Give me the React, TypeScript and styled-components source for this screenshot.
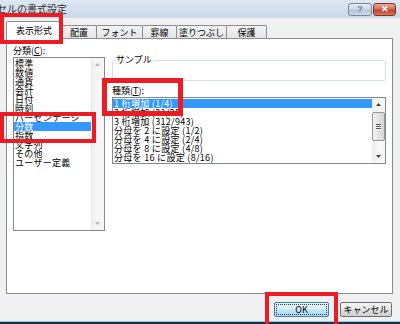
import React from 'react'
import styled, { createGlobalStyle } from 'styled-components'

const GlobalStyle = createGlobalStyle`
  html, body {
    margin: 0;
    padding: 0;
    background: #f0f0f0;
  }
`

const Window = styled.div`
  position: relative;
  width: 400px;
  height: 324px;
  overflow: hidden;
  background: #f0f0f0;
  display: flex;
  flex-direction: column;
  font-family: "Noto Sans CJK JP", "Liberation Sans", sans-serif;
  font-size: 9px;
  color: #000;
`

const TitleBar = styled.div`
  height: 18px;
  flex: none;
  display: flex;
  align-items: center;
  justify-content: space-between;
  padding-right: 4px;
  background: linear-gradient(#dde7f3, #cbd8e8);
  overflow: hidden;
`

const Title = styled.div`
  margin-left: -3px;
  font-size: 10px;
  line-height: 12px;
  color: #2b2b2b;
  white-space: nowrap;
`

const Controls = styled.div`
  display: flex;
  gap: 1px;
  margin-top: 1px;
`

const CaptionButton = styled.div<{ $close?: boolean }>`
  width: ${p => (p.$close ? 23 : 24)}px;
  height: 13px;
  box-sizing: border-box;
  border: 1px solid ${p => (p.$close ? '#8d3023' : '#72869e')};
  border-radius: 3px;
  display: flex;
  align-items: center;
  justify-content: center;
  background: ${p =>
    p.$close
      ? 'linear-gradient(#e9a99a, #d2705d 45%, #c0412d 55%, #d4775f)'
      : 'linear-gradient(#e6edf5, #cdd9e7 45%, #b6c6d9 55%, #cad8e7)'};
  color: ${p => (p.$close ? '#fff' : '#6e7a88')};
  font-family: "Liberation Sans", sans-serif;
  font-weight: bold;
  font-size: 9px;
  line-height: 9px;
`

const Body = styled.div`
  flex: none;
  padding: 3px 7px 0 6px;
  display: flex;
  flex-direction: column;
`

const TabStrip = styled.div`
  position: relative;
  z-index: 1;
  height: 18px;
  margin-bottom: -1px;
  display: flex;
  align-items: flex-end;
`

const Tab = styled.div<{ $active?: boolean; $w: number }>`
  width: ${p => p.$w}px;
  height: ${p => (p.$active ? 18 : 13)}px;
  margin-bottom: ${p => (p.$active ? 0 : 1)}px;
  margin-left: -1px;
  box-sizing: border-box;
  border: 1px solid #898c95;
  border-bottom: none;
  border-radius: 2px 2px 0 0;
  background: ${p => (p.$active ? '#fff' : 'linear-gradient(#f3f3f3, #e5e5e5)')};
  position: relative;
  z-index: ${p => (p.$active ? 2 : 1)};
  display: flex;
  align-items: center;
  justify-content: center;
  line-height: 11px;
  white-space: nowrap;
  &:first-child {
    margin-left: 0;
  }
`

const Panel = styled.div`
  height: 256px;
  box-sizing: border-box;
  border: 1px solid #898c95;
  background: #fff;
  padding: 6px 6px 0 6px;
  display: grid;
  grid-template-columns: 92px 1fr;
  column-gap: 7px;
  align-items: start;
`

const Column = styled.div<{ $top?: number }>`
  display: flex;
  flex-direction: column;
  padding-top: ${p => p.$top ?? 0}px;
`

const Label = styled.div<{ $gap?: number }>`
  height: 12px;
  line-height: 12px;
  margin-top: ${p => p.$gap ?? 0}px;
  white-space: nowrap;
`

const Sample = styled.fieldset`
  margin: 0;
  padding: 0;
  border: 1px solid #d5dfe5;
  border-radius: 3px;
  min-width: 0;
`

const SampleLegend = styled.legend`
  margin-left: 2px;
  padding: 0 1px;
  font-size: 9px;
  line-height: 10px;
  color: #000;
`

const SampleArea = styled.div`
  height: 15px;
`

const ListBox = styled.div<{ $height: number }>`
  height: ${p => p.$height}px;
  box-sizing: border-box;
  border: 1px solid #828790;
  background: #fff;
  display: flex;
`

const Items = styled.div`
  flex: 1;
  min-width: 0;
  padding-top: 1px;
`

const Item = styled.div<{ $selected?: boolean }>`
  height: 9px;
  line-height: 9px;
  padding-left: 1px;
  white-space: nowrap;
  letter-spacing: 0.3px;
  background: ${p => (p.$selected ? '#3399ff' : 'transparent')};
  color: ${p => (p.$selected ? '#fff' : '#000')};
`

const ScrollBar = styled.div`
  width: 13px;
  flex: none;
  display: flex;
  flex-direction: column;
  background: linear-gradient(90deg, #ececec, #f6f6f6 40%, #f6f6f6);
`

const ArrowButton = styled.div`
  height: 13px;
  flex: none;
  display: flex;
  align-items: center;
  justify-content: center;
`

const Track = styled.div`
  flex: 1;
  display: flex;
  flex-direction: column;
`

const Thumb = styled.div`
  height: 29px;
  margin: 1px 0 0 0;
  box-sizing: border-box;
  border: 1px solid #979797;
  border-radius: 2px;
  background: linear-gradient(90deg, #f2f2f2, #e4e4e4 50%, #d6d6d6);
  display: flex;
  flex-direction: column;
  align-items: center;
  justify-content: center;
  gap: 1px;
`

const Grip = styled.div`
  width: 5px;
  height: 1px;
  background: #555;
  box-shadow: 0 1px 0 #fff;
`

const Footer = styled.div`
  flex: 1;
  box-sizing: border-box;
  display: flex;
  justify-content: flex-end;
  align-items: flex-start;
  gap: 11px;
  padding: 8px 8px 0 0;
  border-bottom: 2px solid #1f2e3d;
  box-shadow: inset 0 -1px 0 #8fd0f2;
`

const DialogButton = styled.div<{ $primary?: boolean; $w: number }>`
  width: ${p => p.$w}px;
  height: 15px;
  box-sizing: border-box;
  border: 1px solid ${p => (p.$primary ? '#3c7fb1' : '#707070')};
  border-radius: 2px;
  background: ${p =>
    p.$primary
      ? 'linear-gradient(#e8f5fc, #d9effb 45%, #bee6fd 55%, #a7d9f5)'
      : 'linear-gradient(#f2f2f2, #ebebeb 45%, #dddddd 55%, #cfcfcf)'};
  padding: 1px;
  display: flex;
`

const ButtonFace = styled.div<{ $focus?: boolean }>`
  flex: 1;
  box-sizing: border-box;
  border: 1px dotted ${p => (p.$focus ? '#3a3a3a' : 'transparent')};
  display: flex;
  align-items: center;
  justify-content: center;
  line-height: 9px;
  font-size: 9px;
  white-space: nowrap;
`

const Mark = styled.div<{ $x: number; $y: number; $w: number; $h: number; $b?: number }>`
  position: absolute;
  left: ${p => p.$x}px;
  top: ${p => p.$y}px;
  width: ${p => p.$w}px;
  height: ${p => p.$h}px;
  box-sizing: border-box;
  border: ${p => p.$b ?? 4}px solid #ec1c24;
  z-index: 10;
  pointer-events: none;
`

const Triangle = ({ up, color }: { up?: boolean; color: string }) => (
  <svg width="5" height="3" viewBox="0 0 5 3">
    <polygon points={up ? '0,3 5,3 2.5,0' : '0,0 5,0 2.5,3'} fill={color} />
  </svg>
)

const categories = [
  '標準',
  '数値',
  '通貨',
  '会計',
  '日付',
  '時刻',
  'パーセンテージ',
  '分数',
  '指数',
  '文字列',
  'その他',
  'ユーザー定義',
]

const kinds = [
  '1 桁増加 (1/4)',
  '2 桁増加 (21/25)',
  '3 桁増加 (312/943)',
  '分母を 2 に設定 (1/2)',
  '分母を 4 に設定 (2/4)',
  '分母を 8 に設定 (4/8)',
  '分母を 16 に設定 (8/16)',
]

const tabs = [
  { label: '表示形式', w: 56 },
  { label: '配置', w: 36 },
  { label: 'フォント', w: 47 },
  { label: '罫線', w: 35 },
  { label: '塗りつぶし', w: 51 },
  { label: '保護', w: 41 },
]

export default function App() {
  return (
    <>
      <GlobalStyle />
      <Window>
        <TitleBar>
          <Title>セルの書式設定</Title>
          <Controls>
            <CaptionButton>?</CaptionButton>
            <CaptionButton $close>✕</CaptionButton>
          </Controls>
        </TitleBar>

        <Body>
          <TabStrip>
            {tabs.map((t, i) => (
              <Tab key={t.label} $w={t.w} $active={i === 0}>
                {t.label}
              </Tab>
            ))}
          </TabStrip>

          <Panel>
            <Column>
              <Label>
                分類(<u>C</u>):
              </Label>
              <ListBox $height={174}>
                <Items>
                  {categories.map(c => (
                    <Item key={c} $selected={c === '分数'}>
                      {c}
                    </Item>
                  ))}
                </Items>
                <ScrollBar>
                  <ArrowButton>
                    <Triangle up color="#b4b4b4" />
                  </ArrowButton>
                  <Track />
                  <ArrowButton>
                    <Triangle color="#b4b4b4" />
                  </ArrowButton>
                </ScrollBar>
              </ListBox>
            </Column>

            <Column $top={10}>
              <Sample>
                <SampleLegend>サンプル</SampleLegend>
                <SampleArea />
              </Sample>
              <Label $gap={4}>
                種類(<u>T</u>):
              </Label>
              <ListBox $height={67}>
                <Items>
                  {kinds.map((k, i) => (
                    <Item key={k} $selected={i === 0}>
                      {k}
                    </Item>
                  ))}
                </Items>
                <ScrollBar>
                  <ArrowButton>
                    <Triangle up color="#3c3c3c" />
                  </ArrowButton>
                  <Track>
                    <Thumb>
                      <Grip />
                      <Grip />
                      <Grip />
                    </Thumb>
                  </Track>
                  <ArrowButton>
                    <Triangle color="#3c3c3c" />
                  </ArrowButton>
                </ScrollBar>
              </ListBox>
            </Column>
          </Panel>
        </Body>

        <Footer>
          <DialogButton $primary $w={55}>
            <ButtonFace $focus>OK</ButtonFace>
          </DialogButton>
          <DialogButton $w={52}>
            <ButtonFace>キャンセル</ButtonFace>
          </DialogButton>
        </Footer>

        <Mark $x={0} $y={13} $w={63} $h={31} />
        <Mark $x={0} $y={112} $w={96} $h={31} />
        <Mark $x={102} $y={78} $w={81} $h={38} $b={5} />
        <Mark $x={265} $y={292} $w={73} $h={36} />
      </Window>
    </>
  )
}
